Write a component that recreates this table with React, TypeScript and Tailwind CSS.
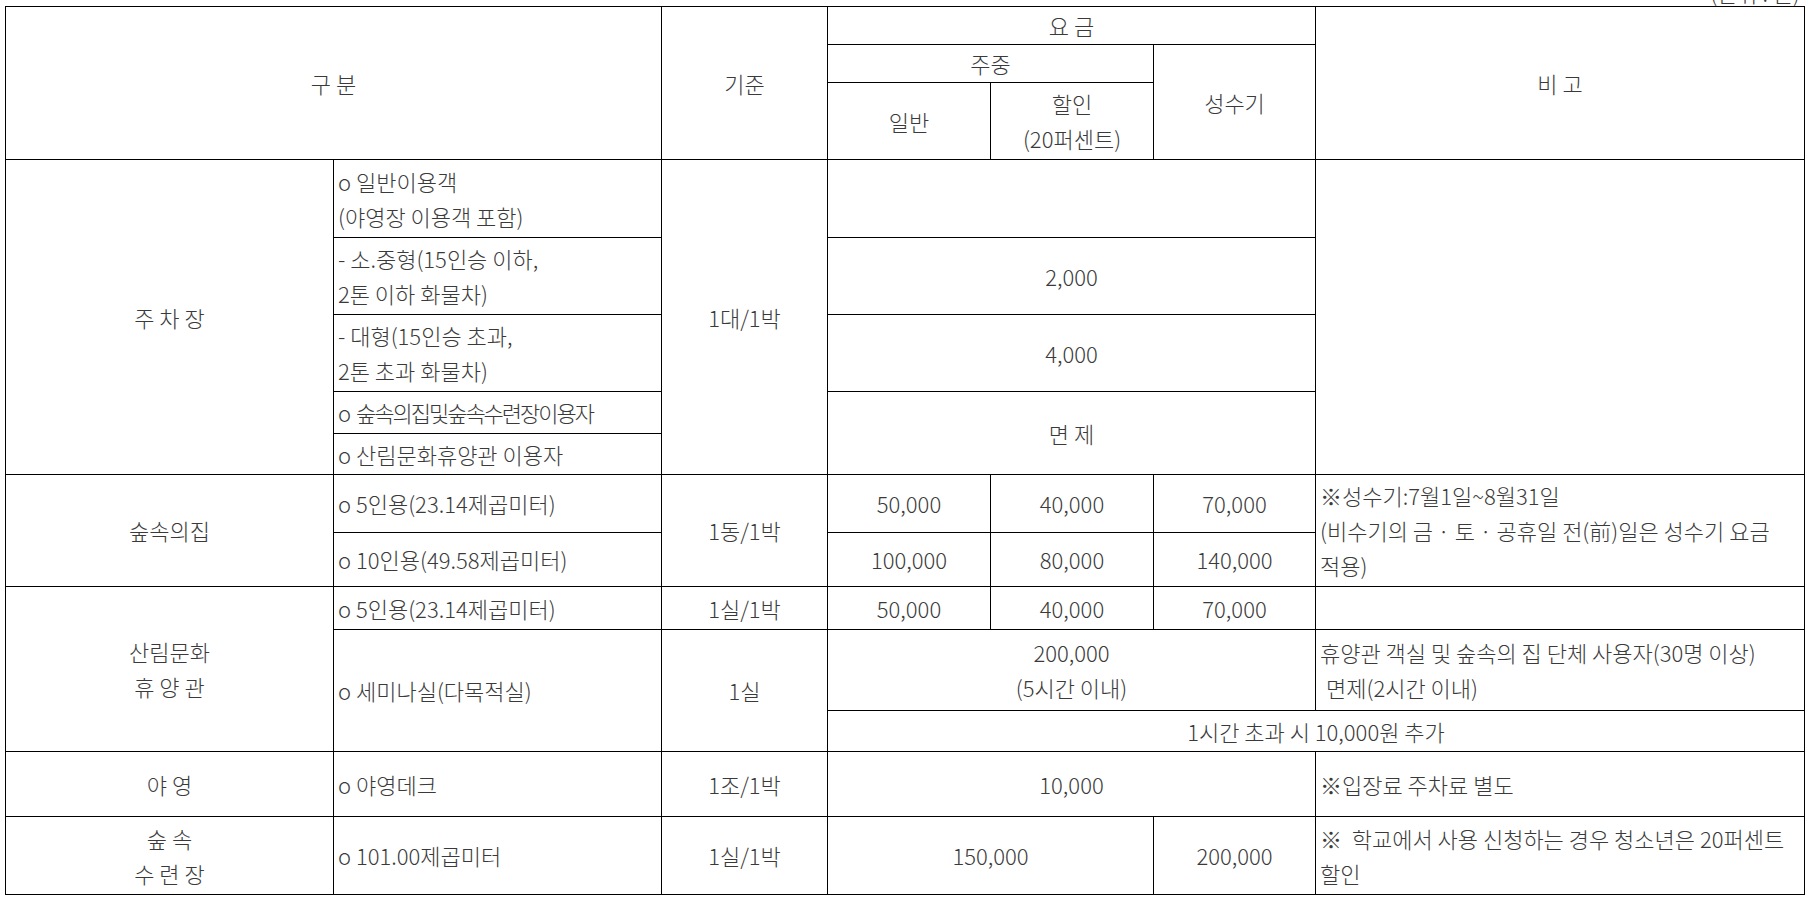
export default function App() {
  // 요금표 (숲속의집 / 휴양관 / 야영 / 수련장)
  const c = "border border-black text-center align-middle px-1 whitespace-nowrap";
  const l = "border border-black text-left align-middle pl-1 pr-1 whitespace-nowrap";

  return (
    <div className="min-h-screen bg-white text-[#3a3a3a] font-['Noto_Sans_CJK_KR',sans-serif] font-light text-[22px] leading-[35px] pl-[5px]">
      <div className="h-[6px] overflow-hidden flex justify-end items-end pr-[9px]">
        <span className="leading-[22px] mb-[3px]">(단위 : 원)</span>
      </div>
      <table className="table-fixed border-collapse w-[1799px]">
        <colgroup>
          <col className="w-[328px]" />
          <col className="w-[328px]" />
          <col className="w-[166px]" />
          <col className="w-[163px]" />
          <col className="w-[163px]" />
          <col className="w-[162px]" />
          <col className="w-[489px]" />
        </colgroup>
        <tbody>
          <tr className="h-[38px]">
            <td className={c} colSpan={2} rowSpan={3}>구 분</td>
            <td className={c} rowSpan={3}>기준</td>
            <td className={c} colSpan={3}>요 금</td>
            <td className={c} rowSpan={3}>비 고</td>
          </tr>
          <tr className="h-[38px]">
            <td className={c} colSpan={2}>주중</td>
            <td className={c} rowSpan={2}>성수기</td>
          </tr>
          <tr className="h-[77px]">
            <td className={c}>일반</td>
            <td className={c}>
              할인
              <br />
              (20퍼센트)
            </td>
          </tr>

          {/* 주차장 */}
          <tr className="h-[78px]">
            <td className={c} rowSpan={5}>주 차 장</td>
            <td className={l}>
              o 일반이용객
              <br />
              (야영장 이용객 포함)
            </td>
            <td className={c} rowSpan={5}>1대/1박</td>
            <td className={c} colSpan={3}></td>
            <td className={c} rowSpan={5}></td>
          </tr>
          <tr className="h-[77px]">
            <td className={l}>
              - 소.중형(15인승 이하,
              <br />
              2톤 이하 화물차)
            </td>
            <td className={c} colSpan={3}>2,000</td>
          </tr>
          <tr className="h-[77px]">
            <td className={l}>
              - 대형(15인승 초과,
              <br />
              2톤 초과 화물차)
            </td>
            <td className={c} colSpan={3}>4,000</td>
          </tr>
          <tr className="h-[42px]">
            <td className={l}>
              o <span className="tracking-[-2px]">숲속의집및숲속수련장이용자</span>
            </td>
            <td className={c} colSpan={3} rowSpan={2}>면 제</td>
          </tr>
          <tr className="h-[41px]">
            <td className={l}>o 산림문화휴양관 이용자</td>
          </tr>

          {/* 숲속의집 */}
          <tr className="h-[58px]">
            <td className={c} rowSpan={2}>숲속의집</td>
            <td className={l}>o 5인용(23.14제곱미터)</td>
            <td className={c} rowSpan={2}>1동/1박</td>
            <td className={c}>50,000</td>
            <td className={c}>40,000</td>
            <td className={c}>70,000</td>
            <td className={l} rowSpan={2}>
              ※성수기:7월1일~8월31일
              <br />
              (비수기의 금 · 토 · 공휴일 전(前)일은 성수기 요금
              <br />
              적용)
            </td>
          </tr>
          <tr className="h-[54px]">
            <td className={l}>o 10인용(49.58제곱미터)</td>
            <td className={c}>100,000</td>
            <td className={c}>80,000</td>
            <td className={c}>140,000</td>
          </tr>

          {/* 산림문화휴양관 */}
          <tr className="h-[43px]">
            <td className={c} rowSpan={3}>
              산림문화
              <br />
              휴 양 관
            </td>
            <td className={l}>o 5인용(23.14제곱미터)</td>
            <td className={c}>1실/1박</td>
            <td className={c}>50,000</td>
            <td className={c}>40,000</td>
            <td className={c}>70,000</td>
            <td className={l}></td>
          </tr>
          <tr className="h-[81px]">
            <td className={l} rowSpan={2}>o 세미나실(다목적실)</td>
            <td className={c} rowSpan={2}>1실</td>
            <td className={c} colSpan={3}>
              200,000
              <br />
              (5시간 이내)
            </td>
            <td className={l}>
              휴양관 객실 및 숲속의 집 단체 사용자(30명 이상)
              <br />
              <span className="pl-[6px]">면제(2시간 이내)</span>
            </td>
          </tr>
          <tr className="h-[41px]">
            <td className={c} colSpan={4}>1시간 초과 시 10,000원 추가</td>
          </tr>

          {/* 야영 */}
          <tr className="h-[65px]">
            <td className={c}>야 영</td>
            <td className={l}>o 야영데크</td>
            <td className={c}>1조/1박</td>
            <td className={c} colSpan={3}>10,000</td>
            <td className={l}>※입장료 주차료 별도</td>
          </tr>

          {/* 숲속수련장 */}
          <tr className="h-[78px]">
            <td className={c}>
              숲 속
              <br />
              수 련 장
            </td>
            <td className={l}>o 101.00제곱미터</td>
            <td className={c}>1실/1박</td>
            <td className={c} colSpan={2}>150,000</td>
            <td className={c}>200,000</td>
            <td className={l}>
              ※&nbsp; 학교에서 사용 신청하는 경우 청소년은 20퍼센트
              <br />
              할인
            </td>
          </tr>
        </tbody>
      </table>
    </div>
  );
}
